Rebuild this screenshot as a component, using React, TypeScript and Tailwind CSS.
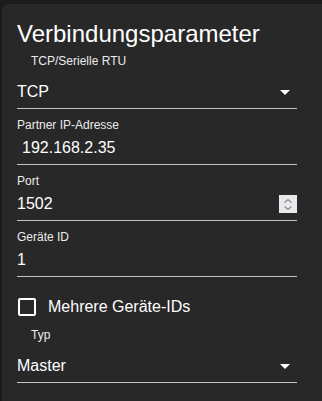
import React from 'react';

function Caret() {
  return (
    <svg width="10" height="5" viewBox="0 0 10 5" className="fill-white">
      <path d="M0 0 L10 0 L5 5 Z" />
    </svg>
  );
}

function Spinner() {
  return (
    <div className="w-[18px] h-[18px] bg-[#e9e9ed] flex flex-col items-center justify-center gap-[3px]">
      <svg width="8" height="4" viewBox="0 0 8 4" className="stroke-[#8a8a90]" fill="none">
        <path d="M0.5 3.5 L4 0.5 L7.5 3.5" strokeWidth="1.2" />
      </svg>
      <svg width="8" height="4" viewBox="0 0 8 4" className="stroke-[#8a8a90]" fill="none">
        <path d="M0.5 0.5 L4 3.5 L7.5 0.5" strokeWidth="1.2" />
      </svg>
    </div>
  );
}

function TextField({ label, value, indent = false, spinner = false }: { label: string; value: string; indent?: boolean; spinner?: boolean }) {
  return (
    <div className="mt-[8px] w-[280px]">
      <div className="text-[12px] leading-[16px] text-[#ececec]">{label}</div>
      <div className="mt-[3px] pb-[4px] border-b border-[#c4c4c4] flex items-center justify-between">
        <span className={`text-[16px] leading-[24px] text-white ${indent ? 'pl-[5px]' : ''}`}>{value}</span>
        {spinner && <Spinner />}
      </div>
    </div>
  );
}

function SelectField({ label, value }: { label: string; value: string }) {
  return (
    <div className="w-[280px]">
      <div className="pl-[14px] text-[12px] leading-[16px] text-[#ececec]">{label}</div>
      <div className="mt-[11px] pb-[4px] border-b border-[#c4c4c4] flex items-center justify-between pr-[7px]">
        <span className="text-[16px] leading-[24px] text-white">{value}</span>
        <Caret />
      </div>
    </div>
  );
}

export default function App() {
  return (
    <div className="w-[322px] h-[401px] bg-[#1b1b1b] pl-[2px] pt-[4px] overflow-hidden font-['Liberation_Sans',Arial,sans-serif]">
      <div className="h-full bg-[#282828] rounded-tl-[6px] pl-[15px] pt-[16px]">
        <h1 className="text-[24px] leading-[28px] text-white">Verbindungsparameter</h1>
        <div className="mt-[5px]">
          <SelectField label="TCP/Serielle RTU" value="TCP" />
        </div>
        <TextField label="Partner IP-Adresse" value="192.168.2.35" indent />
        <TextField label="Port" value="1502" spinner />
        <TextField label="Geräte ID" value="1" />
        <div className="mt-[18px] flex items-center">
          <div className="w-[18px] h-[18px] border-2 border-white rounded-[2px] ml-[1px]" />
          <span className="ml-[12px] text-[16px] leading-[24px] text-white">Mehrere Geräte-IDs</span>
        </div>
        <div className="mt-[8px]">
          <SelectField label="Typ" value="Master" />
        </div>
      </div>
    </div>
  );
}
